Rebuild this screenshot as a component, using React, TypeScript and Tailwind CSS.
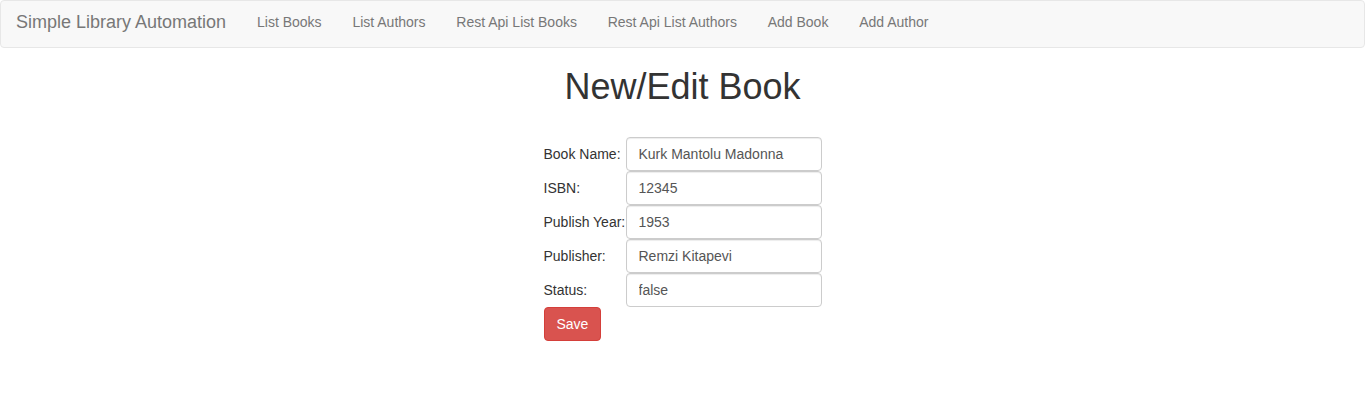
export default function App() {
  const links = ["List Books", "List Authors", "Rest Api List Books", "Rest Api List Authors", "Add Book", "Add Author"];
  const fields: [string, string][] = [
    ["Book Name:", "Kurk Mantolu Madonna"],
    ["ISBN:", "12345"],
    ["Publish Year:", "1953"],
    ["Publisher:", "Remzi Kitapevi"],
    ["Status:", "false"],
  ];

  return (
    <div className="min-h-[413px] bg-white text-[14px] text-[#333] font-['Liberation_Sans',Arial,sans-serif]">
      {/* Navbar */}
      <nav className="flex h-[48px] items-center rounded-[4px] border border-[#e7e7e7] bg-[#f8f8f8] pb-[4px]">
        <a className="pl-[15px] pr-[15.5px] text-[18px] leading-[20px] text-[#777]">Simple Library Automation</a>
        <ul className="flex">
          {links.map((l) => (
            <li key={l}>
              <a className="block px-[15.4px] leading-[20px] text-[#777]">{l}</a>
            </li>
          ))}
        </ul>
      </nav>

      <h1 className="mt-[19px] mb-[30px] text-center text-[36px] leading-[40px] font-medium text-[#333]">New/Edit Book</h1>

      <div className="flex justify-center">
        <div className="flex flex-col">
          {fields.map(([label, value]) => (
            <div key={label} className="flex items-center">
              <label className="w-[82px] leading-[20px] text-[#333]">{label}</label>
              <input
                readOnly
                value={value}
                className="h-[34px] w-[196px] rounded-[4px] border border-[#ccc] px-[12px] py-[6px] text-[14px] text-[#555] shadow-[inset_0_1px_1px_rgba(0,0,0,0.075)] outline-none"
              />
            </div>
          ))}
          <div>
            <button className="h-[34px] rounded-[4px] border border-[#d43f3a] bg-[#d9534f] px-[12px] text-[14px] leading-[20px] text-white">
              Save
            </button>
          </div>
        </div>
      </div>
    </div>
  );
}
